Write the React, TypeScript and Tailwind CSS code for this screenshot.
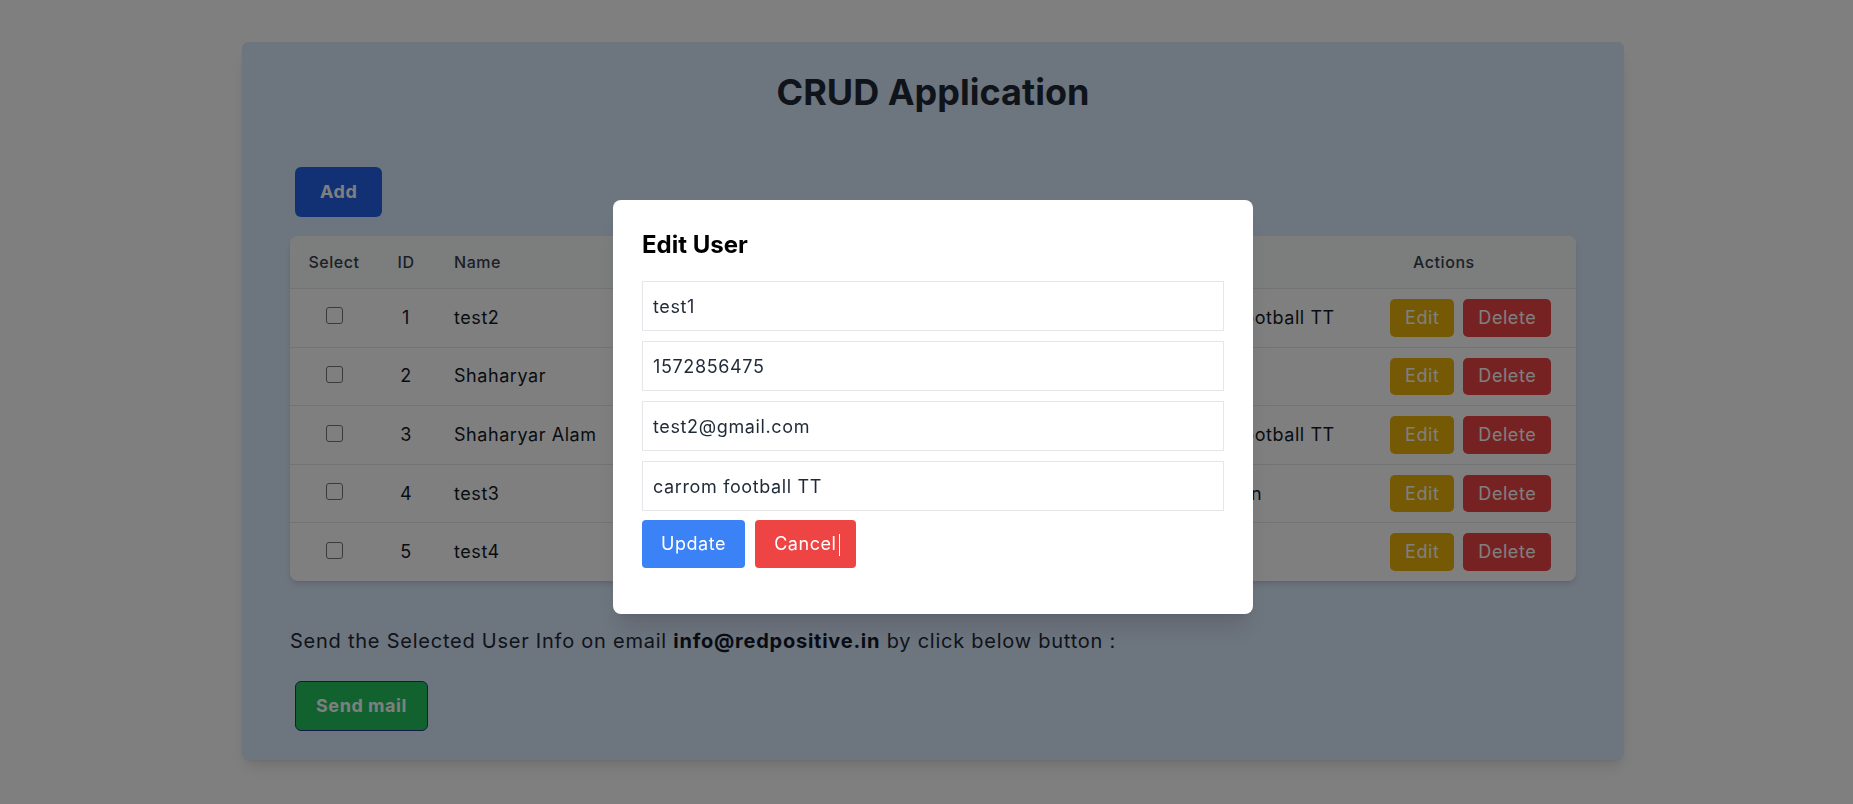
import { useState } from "react";

type User = {
  id: number;
  name: string;
  phone: string;
  email: string;
  hobbies: string;
};

const users: User[] = [
  { id: 1, name: "test2", phone: "1572856475", email: "test2@gmail.com", hobbies: "carrom football TT" },
  { id: 2, name: "Shaharyar", phone: "9876543210", email: "shaharyar@gmail.com", hobbies: "cricket" },
  { id: 3, name: "Shaharyar Alam", phone: "9123456780", email: "alam@gmail.com", hobbies: "carrom football TT" },
  { id: 4, name: "test3", phone: "8899776655", email: "test3@gmail.com", hobbies: "badminton" },
  { id: 5, name: "test4", phone: "7766554433", email: "test4@gmail.com", hobbies: "chess" },
];

function Checkbox() {
  return (
    <span className="inline-block w-[17px] h-[17px] mb-[6px] rounded-[3px] border-[1.5px] border-[#767676] bg-white align-middle" />
  );
}

export default function App() {
  const [form] = useState({
    name: "test1",
    phone: "1572856475",
    email: "test2@gmail.com",
    hobbies: "carrom football TT",
  });

  return (
    <div className="min-h-screen bg-white font-['Inter',sans-serif] tracking-[0.035em] pt-[42px] pb-[43px]">
      {/* Main card */}
      <div className="ml-[242px] w-[1382px] bg-[#dbeafe] rounded-md shadow-lg px-12 pt-[30px] pb-[29px]">
        <h1 className="text-4xl leading-10 font-bold tracking-normal text-[#1f2937] text-center">CRUD Application</h1>

        <button className="mt-[55px] ml-[5px] h-[50px] px-[25px] rounded-md bg-[#2563eb] text-white text-lg font-bold">
          Add
        </button>

        <div className="mt-[19px] bg-white rounded-lg shadow-md overflow-hidden">
          <table className="w-full table-fixed border-collapse">
            <colgroup>
              <col className="w-[88px]" />
              <col className="w-[56px]" />
              <col className="w-[250px]" />
              <col className="w-[200px]" />
              <col className="w-[273px]" />
              <col className="w-[217px]" />
              <col className="w-[202px]" />
            </colgroup>
            <thead>
              <tr className="bg-[#f9fafb] border-b border-[#e5e7eb] text-base leading-6 text-[#374151]">
                <th className="py-[14px] text-center font-medium">Select</th>
                <th className="py-[14px] text-center font-medium">ID</th>
                <th className="py-[14px] pl-5 text-left font-medium">Name</th>
                <th className="py-[14px] pl-5 text-left font-medium">Phone Number</th>
                <th className="py-[14px] pl-5 text-left font-medium">Email</th>
                <th className="py-[14px] pl-[10px] text-left font-medium">Hobbies</th>
                <th className="py-[14px] pl-[39px] text-left font-medium">Actions</th>
              </tr>
            </thead>
            <tbody>
              {users.map((u, i) => (
                <tr
                  key={u.id}
                  className={`text-lg text-[#111827] ${i < users.length - 1 ? "border-b border-[#e5e7eb]" : ""}`}
                >
                  <td className="py-[10px] text-center">
                    <Checkbox />
                  </td>
                  <td className="py-[10px] text-center">{u.id}</td>
                  <td className="py-[10px] pl-5">{u.name}</td>
                  <td className="py-[10px] pl-5">{u.phone}</td>
                  <td className="py-[10px] pl-5">{u.email}</td>
                  <td className="py-[10px] pl-[10px] whitespace-nowrap">{u.hobbies}</td>
                  <td className="py-[10px] pl-4">
                    <div className="flex gap-[9px]">
                      <button className="h-[37.6px] px-[15px] rounded-[5px] bg-[#eab308] text-white text-lg">
                        Edit
                      </button>
                      <button className="h-[37.6px] px-[15px] rounded-[5px] bg-[#ef4444] text-white text-lg">
                        Delete
                      </button>
                    </div>
                  </td>
                </tr>
              ))}
            </tbody>
          </table>
        </div>

        <p className="mt-[46px] text-xl leading-7 tracking-[0.038em] text-[#1f2937]">
          Send the Selected User Info on email <span className="font-bold text-[#111827]">info@redpositive.in</span> by
          click below button :
        </p>

        <button className="mt-[26px] ml-[5px] h-[50px] px-5 rounded-md border border-[#1e3a8a] bg-[#22c55e] text-white text-lg font-bold">
          Send mail
        </button>
      </div>

      {/* Edit modal */}
      <div className="fixed inset-0 bg-black/50 flex items-center justify-center pl-[13px] pt-[10px]">
        <div className="w-[640px] bg-white rounded-lg shadow-xl px-[29px] pt-[29px] pb-[46px]">
          <h2 className="text-2xl leading-8 font-bold tracking-normal text-black">Edit User</h2>
          <div className="mt-[20px] flex flex-col gap-[10px]">
            {[form.name, form.phone, form.email, form.hobbies].map((v, i) => (
              <input
                key={i}
                readOnly
                value={v}
                className="h-[50px] w-full border border-[#e5e7eb] px-[10px] text-lg tracking-[0.035em] text-[#1f2937] outline-none"
              />
            ))}
          </div>
          <div className="mt-[9px] flex gap-[10px]">
            <button className="h-12 px-[19px] rounded bg-[#3b82f6] text-white text-lg">Update</button>
            <button className="relative h-12 px-[19px] rounded bg-[#ef4444] text-white text-lg">
              Cancel
              <span className="absolute right-[16px] top-[14px] w-px h-[22px] bg-white" />
            </button>
          </div>
        </div>
      </div>
    </div>
  );
}
